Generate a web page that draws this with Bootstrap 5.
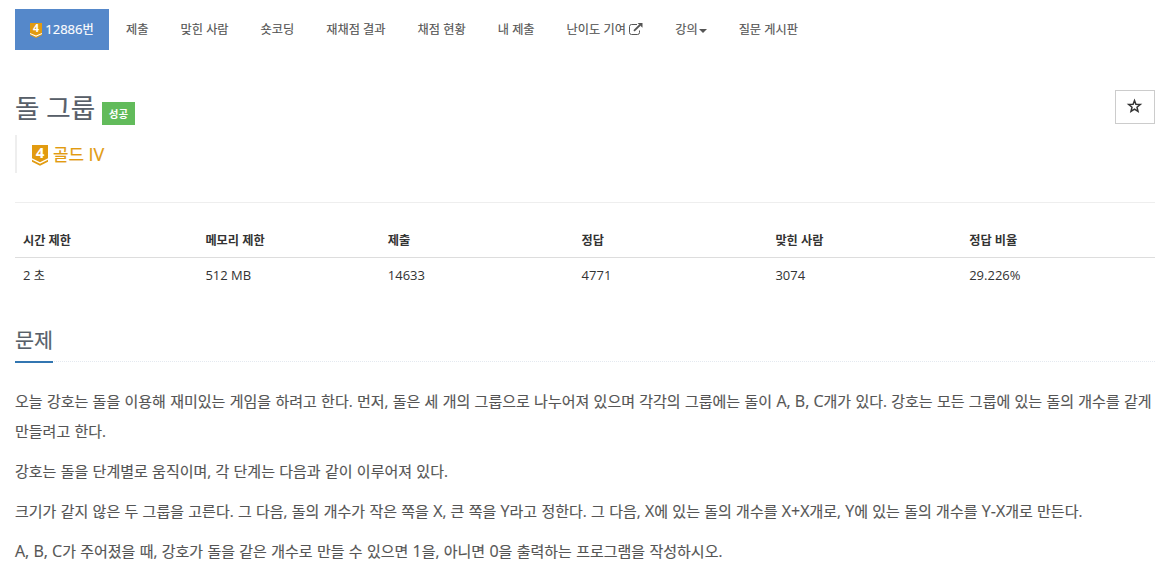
<!DOCTYPE html>
<html lang="ko">
<head>
    <meta charset="UTF-8">
    <title>12886번: 돌 그룹</title>
    <meta name="viewport" content="width=device-width, initial-scale=1">
    <link href="https://cdn.jsdelivr.net/npm/bootstrap@5.3.0/dist/css/bootstrap.min.css" rel="stylesheet">
    <style>
        body { font-family: "Open Sans", "Noto Sans CJK KR", sans-serif; font-size: 13px; color: #333; overflow: hidden; }
        .page { width: 1140px; margin-left: 15px; padding-top: 9px; }
        .page svg { overflow: visible; }

        .problem-menu { gap: 2px; margin-bottom: 40px; }
        .problem-menu .nav-link { height: 41px; line-height: 41px; padding: 0 15px; border-radius: 0; color: #555; font-size: 12.2px; white-space: nowrap; word-spacing: .1px; -webkit-text-stroke: .15px; }
        .problem-menu .nav-link.active { background: #5588ca; color: #fff; width: 94px; }
        .problem-menu .num { font-size: 13px; }
        .caret { display: inline-block; vertical-align: middle; margin-left: 1px; border-top: 4px solid; border-left: 4px solid transparent; border-right: 4px solid transparent; }

        .problem-title { font-size: 26.5px; line-height: 36px; color: #585f69; font-weight: 400; -webkit-text-stroke: .2px; }
        .label-ac { background: #62bb5b; color: #fff; font-size: 10.5px; font-weight: 700; line-height: 24px; height: 23px; width: 33px; text-align: center; margin: 12px 0 0 7px; }
        .btn-star { width: 40px; height: 34px; border: 1px solid #ccc; border-radius: 0; }
        .tier { height: 38px; border-left: 2px solid #eee; padding-left: 15px; margin-top: 9px; color: #e29b10; font-size: 16.9px; -webkit-text-stroke: .2px; }
        .tier svg { margin: 2px 5px 0 0; }
        .tier .roman { font-size: 18px; }
        .page svg text { -webkit-text-stroke: 0; }
        .page hr { margin: 29px 0 19px; border-top: 1px solid #eee; opacity: 1; }

        .problem-info { table-layout: fixed; margin-bottom: 31px; }
        .problem-info th, .problem-info td { padding: 8px; line-height: 19px; color: #333; background: none; }
        .problem-info th { font-size: 12.2px; border-bottom: 1px solid #ddd; padding: 9px 8px 7px; }
        .problem-info td { border: 0; }
        .problem-info .unit { font-size: 12.2px; }

        .headline { border-bottom: 1px dotted #e4e9f0; height: 38px; margin-bottom: 24px; }
        .headline h2 { font-size: 20.7px; line-height: 32px; font-weight: 400; color: #585f69; border-bottom: 2px solid #3276b1; height: 39px; margin: 0; -webkit-text-stroke: .2px; }

        .description p { font-size: 15px; line-height: 30px; color: #555; margin-bottom: 10px; word-spacing: .4px; white-space: nowrap; -webkit-text-stroke: .15px; }
        .description span { font-size: 16px; word-spacing: 0; line-height: 1; }
    </style>
</head>
<body>
    <div class="page">
        <ul class="nav nav-pills problem-menu">
            <li class="nav-item"><a class="nav-link active" href="#"><svg width="12" height="15" viewBox="0 0 16 20" class="align-middle"><path d="M0 0h16v16l-8 4-8-4z" fill="#e29b10"/><path d="M0 13.2l8 3.6 8-3.6v1.6l-8 3.6-8-3.6z" fill="#fff"/><text x="8" y="11.8" text-anchor="middle" font-size="14" font-weight="700" fill="#fff">4</text></svg> <span class="num">12886</span>번</a></li>
            <li class="nav-item"><a class="nav-link" href="#">제출</a></li>
            <li class="nav-item"><a class="nav-link" href="#">맞힌 사람</a></li>
            <li class="nav-item"><a class="nav-link" href="#">숏코딩</a></li>
            <li class="nav-item"><a class="nav-link" href="#">재채점 결과</a></li>
            <li class="nav-item"><a class="nav-link" href="#">채점 현황</a></li>
            <li class="nav-item"><a class="nav-link" href="#">내 제출</a></li>
            <li class="nav-item"><a class="nav-link" href="#">난이도 기여 <svg width="14" height="12" viewBox="0 0 14 12" fill="none" stroke="currentColor" style="vertical-align:-1px"><path d="M8 1.5H2.5a2 2 0 0 0-2 2v6a2 2 0 0 0 2 2h6a2 2 0 0 0 2-2V7.5"/><path d="M5 7.8L11 2" stroke-width="1.8"/><path d="M8.6 0H13.5v4.8z" fill="currentColor" stroke="none"/></svg></a></li>
            <li class="nav-item"><a class="nav-link" href="#">강의<span class="caret"></span></a></li>
            <li class="nav-item"><a class="nav-link" href="#">질문 게시판</a></li>
        </ul>

        <div class="d-flex justify-content-between align-items-start">
            <div class="d-flex">
                <h1 class="problem-title mb-0">돌 그룹</h1>
                <span class="label-ac">성공</span>
            </div>
            <button type="button" class="btn btn-star d-flex align-items-center justify-content-center p-0"><svg width="14" height="14" viewBox="0 0 14 14" fill="none" stroke="#333" stroke-width="1.5"><path d="M6.5 .6l1.4 3.7 4.4.2L9 7.2l1 4.2-3.5-2.3L3 11.4l1-4.2L.7 4.5l4.4-.2z"/></svg></button>
        </div>
        <div class="tier d-flex align-items-center">
            <svg width="16" height="21" viewBox="0 0 16 21"><path d="M0 0h16v13.2l-8 4-8-4z" fill="#e29b10"/><path d="M0 14.8l8 4 8-4v2l-8 4-8-4z" fill="#e29b10"/><text x="8" y="12.8" text-anchor="middle" font-size="15" font-weight="700" fill="#fff">4</text></svg>
            <span>골드 <span class="roman">IV</span></span>
        </div>
        <hr>

        <table class="table problem-info">
            <thead>
                <tr>
                    <th style="width:16%">시간 제한</th>
                    <th style="width:16%">메모리 제한</th>
                    <th style="width:17%">제출</th>
                    <th style="width:17%">정답</th>
                    <th style="width:17%">맞힌 사람</th>
                    <th style="width:17%">정답 비율</th>
                </tr>
            </thead>
            <tbody>
                <tr>
                    <td>2 <span class="unit">초</span></td>
                    <td>512 MB</td>
                    <td>14633</td>
                    <td>4771</td>
                    <td>3074</td>
                    <td>29.226%</td>
                </tr>
            </tbody>
        </table>

        <div class="headline d-flex align-items-start"><h2>문제</h2></div>
        <div class="description">
            <p>오늘 강호는 돌을 이용해 재미있는 게임을 하려고 한다. 먼저, 돌은 세 개의 그룹으로 나누어져 있으며 각각의 그룹에는 돌이 <span>A, B, C</span>개가 있다. 강호는 모든 그룹에 있는 돌의 개수를 같게<br>만들려고 한다.</p>
            <p>강호는 돌을 단계별로 움직이며, 각 단계는 다음과 같이 이루어져 있다.</p>
            <p>크기가 같지 않은 두 그룹을 고른다. 그 다음, 돌의 개수가 작은 쪽을 <span>X</span>, 큰 쪽을 <span>Y</span>라고 정한다. 그 다음, <span>X</span>에 있는 돌의 개수를 <span>X+X</span>개로, <span>Y</span>에 있는 돌의 개수를 <span>Y-X</span>개로 만든다.</p>
            <p><span>A, B, C</span>가 주어졌을 때, 강호가 돌을 같은 개수로 만들 수 있으면 <span>1</span>을, 아니면 <span>0</span>을 출력하는 프로그램을 작성하시오.</p>
        </div>
    </div>
    <script src="https://cdn.jsdelivr.net/npm/bootstrap@5.3.0/dist/js/bootstrap.bundle.min.js"></script>
</body>
</html>
